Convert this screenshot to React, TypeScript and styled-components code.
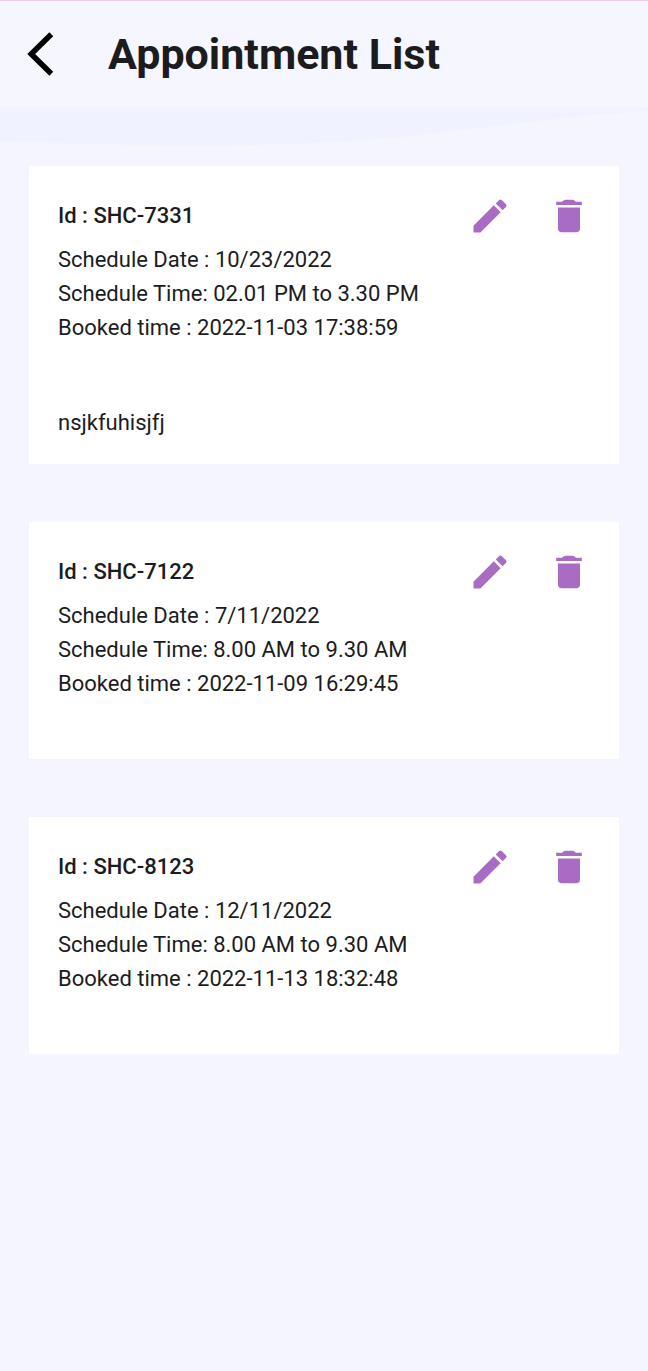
import React from "react";
import styled, { createGlobalStyle } from "styled-components";
import { MdEdit } from "react-icons/md";

const GlobalStyle = createGlobalStyle`
  * { box-sizing: border-box; }
  body {
    margin: 0;
    min-height: 100vh;
    background: #f5f5ff;
    color: #1c1c1e;
    font-family: Roboto, "Liberation Sans", sans-serif;
  }
  h1, h2, p, ul { margin: 0; padding: 0; }
`;

const Header = styled.header`
  display: flex;
  align-items: center;
  gap: 40px;
  height: 107px;
  padding: 0 16px;
  border-top: 1px solid #ecd0f4;
  background: #f5f6ff;
`;

const IconButton = styled.button`
  display: flex;
  align-items: center;
  justify-content: center;
  padding: 0;
  border: 0;
  background: none;
  color: #a86cc4;
  cursor: pointer;
`;

const BackButton = styled(IconButton)`
  width: 52px;
  height: 52px;
  color: #000;
`;

const Title = styled.h1`
  font-size: 43px;
  font-weight: 700;
  line-height: 52px;
`;

const Wave = styled.svg`
  display: block;
  width: 100%;
  height: 59px;
`;

const List = styled.ul`
  display: flex;
  flex-direction: column;
  gap: 58px;
  padding: 0 29px 58px;
  list-style: none;
`;

const Card = styled.li`
  padding: 28px 28px 24px 29px;
  background: #fff;
`;

const CardHeader = styled.div`
  display: flex;
  align-items: center;
  justify-content: space-between;
  height: 44px;
  margin-bottom: 5px;
`;

const CardId = styled.h2`
  font-size: 22px;
  font-weight: 550;
  line-height: 34px;
`;

const Actions = styled.div`
  display: flex;
  gap: 35px;
`;

const Detail = styled.p`
  font-size: 22px;
  font-weight: 450;
  line-height: 34px;
`;

const Note = styled.p`
  padding-top: 61px;
  font-size: 22px;
  font-weight: 400;
  line-height: 34px;

  &:empty {
    padding-top: 34px;
  }
`;

type Appointment = {
  id: string;
  date: string;
  time: string;
  booked: string;
  note: string;
};

const appointments: Appointment[] = [
  { id: "SHC-7331", date: "10/23/2022", time: "02.01 PM to 3.30 PM", booked: "2022-11-03 17:38:59", note: "nsjkfuhisjfj" },
  { id: "SHC-7122", date: "7/11/2022", time: "8.00 AM to 9.30 AM", booked: "2022-11-09 16:29:45", note: "" },
  { id: "SHC-8123", date: "12/11/2022", time: "8.00 AM to 9.30 AM", booked: "2022-11-13 18:32:48", note: "" },
];

function TrashIcon() {
  return (
    <svg width="44" height="44" viewBox="0 0 24 24" fill="currentColor">
      <path d="M5 4.200H8.200C9 3.500 9.700 3.200 10.500 3.200H13.500C14.300 3.200 15 3.500 15.800 4.200H19V6H5Z" />
      <path d="M6 7.300H18V19C18 20.200 17.200 20.900 16 20.900H8C6.800 20.900 6 20.200 6 19Z" />
    </svg>
  );
}

function AppointmentCard({ item }: { item: Appointment }) {
  return (
    <Card>
      <CardHeader>
        <CardId>Id : {item.id}</CardId>
        <Actions>
          <IconButton type="button" aria-label={`Edit ${item.id}`}>
            <MdEdit size={44} />
          </IconButton>
          <IconButton type="button" aria-label={`Delete ${item.id}`}>
            <TrashIcon />
          </IconButton>
        </Actions>
      </CardHeader>
      <Detail>Schedule Date : {item.date}</Detail>
      <Detail>Schedule Time: {item.time}</Detail>
      <Detail>Booked time : {item.booked}</Detail>
      <Note>{item.note}</Note>
    </Card>
  );
}

export default function App() {
  return (
    <>
      <GlobalStyle />
      <Header>
        <BackButton type="button" aria-label="Back">
          <svg width="52" height="52" viewBox="0 0 52 52" fill="none" stroke="currentColor" strokeWidth="5.500">
            <path d="M35.300 6.300 L15.200 26 L35.300 45.700" />
          </svg>
        </BackButton>
        <Title>Appointment List</Title>
      </Header>
      <Wave viewBox="0 0 648 59" preserveAspectRatio="none" aria-hidden="true">
        <path d="M0 0 H648 V4 C560 10 500 19 430 27 C300 42 150 40 0 34 Z" fill="#f1f2ff" />
      </Wave>
      <main>
        <List>
          {appointments.map((item) => (
            <AppointmentCard key={item.id} item={item} />
          ))}
        </List>
      </main>
    </>
  );
}
